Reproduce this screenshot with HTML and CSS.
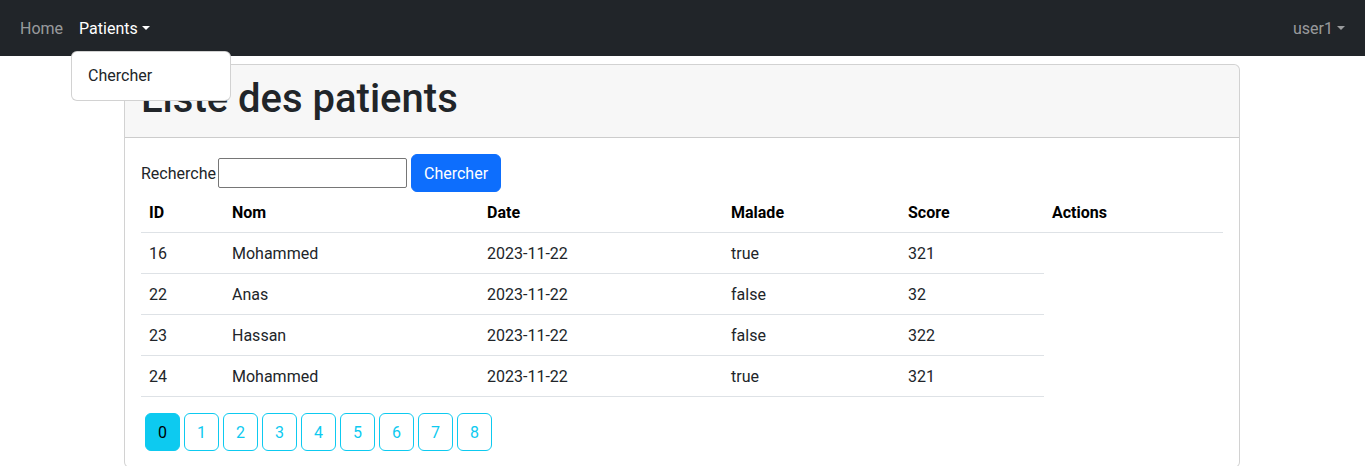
FILE: index.html
```html
<!DOCTYPE html>
<html lang="fr">
<head>
<meta charset="utf-8">
<title>Liste des patients</title>
<link rel="stylesheet" href="styles.css">
</head>
<body>
<nav class="navbar">
  <div class="nav-inner">
    <ul class="nav-list">
      <li class="nav-item"><a class="nav-link" href="#">Home</a></li>
      <li class="nav-item dropdown">
        <a class="nav-link active" href="#">Patients<span class="caret"></span></a>
        <ul class="dropdown-menu">
          <li><a class="dropdown-item" href="#">Chercher</a></li>
        </ul>
      </li>
    </ul>
    <ul class="nav-list">
      <li class="nav-item"><a class="nav-link" href="#">user1<span class="caret"></span></a></li>
    </ul>
  </div>
</nav>
<div class="container">
  <div class="card">
    <div class="card-header"><h1>Liste des patients</h1></div>
    <div class="card-body">
      <form class="search">
        <label>Recherche</label>
        <input type="text" class="search-input">
        <button type="button" class="btn btn-primary">Chercher</button>
      </form>
      <table class="table">
        <colgroup>
          <col class="c-id"><col class="c-nom"><col class="c-date"><col class="c-malade"><col class="c-score"><col class="c-actions">
        </colgroup>
        <thead>
          <tr><th>ID</th><th>Nom</th><th>Date</th><th>Malade</th><th>Score</th><th>Actions</th></tr>
        </thead>
        <tbody>
          <tr><td>16</td><td>Mohammed</td><td>2023-11-22</td><td>true</td><td>321</td></tr>
          <tr><td>22</td><td>Anas</td><td>2023-11-22</td><td>false</td><td>32</td></tr>
          <tr><td>23</td><td>Hassan</td><td>2023-11-22</td><td>false</td><td>322</td></tr>
          <tr><td>24</td><td>Mohammed</td><td>2023-11-22</td><td>true</td><td>321</td></tr>
        </tbody>
      </table>
      <div class="pages">
        <a class="page page-active" href="#">0</a>
        <a class="page" href="#">1</a>
        <a class="page" href="#">2</a>
        <a class="page" href="#">3</a>
        <a class="page" href="#">4</a>
        <a class="page" href="#">5</a>
        <a class="page" href="#">6</a>
        <a class="page" href="#">7</a>
        <a class="page" href="#">8</a>
      </div>
    </div>
  </div>
</div>
</body>
</html>
```
FILE: styles.css
```css
* { box-sizing: border-box; }
body {
  margin: 0;
  font-family: Roboto, "Noto Sans", sans-serif;
  font-size: 16px;
  line-height: 1.5;
  color: #212529;
  background: #fff;
}
a { text-decoration: none; }
ul { list-style: none; margin: 0; padding: 0; }

.navbar {
  background: #212529;
  padding: 8px 0;
  height: 56px;
}
.nav-inner {
  display: flex;
  justify-content: space-between;
  padding: 0 12px;
}
.nav-list { display: flex; }
.nav-item { position: relative; }
.nav-link {
  display: block;
  padding: 9px 8px 7px;
  color: rgba(255,255,255,.55);
}
.nav-link.active { color: #fff; }
.caret {
  display: inline-block;
  margin-left: 0.255em;
  vertical-align: 0.255em;
  border-top: 0.3em solid;
  border-right: 0.3em solid transparent;
  border-left: 0.3em solid transparent;
  border-bottom: 0;
}
.dropdown-menu {
  position: absolute;
  top: 100%;
  left: 0;
  margin-top: 3px;
  min-width: 160px;
  padding: 8px 0;
  background: #fff;
  border: 1px solid rgba(0,0,0,.175);
  border-radius: 6px;
  z-index: 10;
}
.dropdown-item {
  display: block;
  padding: 4px 16px;
  color: #212529;
  white-space: nowrap;
}

.container {
  width: 1140px;
  margin: 0 0 0 112px;
  padding: 0 12px;
}
.card {
  margin-top: 8px;
  border: 1px solid rgba(0,0,0,.175);
  border-radius: 6px;
  background: #fff;
}
.card-header {
  padding: 8px 16px;
  background: rgba(0,0,0,.03);
  border-bottom: 1px solid rgba(0,0,0,.175);
  border-radius: 5px 5px 0 0;
}
.card-header h1 {
  margin: 0 0 6px;
  padding-top: 2px;
  font-size: 40px;
  font-weight: 500;
  line-height: 1.2;
}
.card-body { padding: 16px; }

.search {
  display: flex;
  align-items: center;
  height: 38px;
}
.search label { margin-right: 2px; padding-top: 1px; }
.search-input {
  width: 189px;
  height: 30px;
  border: 1px solid #767676;
  border-radius: 2px;
  font: inherit;
  margin-right: 4px;
  padding: 1px 2px;
}
.btn {
  display: inline-block;
  padding: 7px 12px 5px;
  font: inherit;
  line-height: 1.5;
  border: 1px solid transparent;
  border-radius: 6px;
  cursor: pointer;
}
.btn-primary { background: #0d6efd; border-color: #0d6efd; color: #fff; }

.table {
  width: 100%;
  border-collapse: collapse;
  margin-bottom: 16px;
  color: #212529;
}
.table th, .table td {
  padding: 9px 8px 7px;
  text-align: left;
  border-bottom: 1px solid #dee2e6;
  vertical-align: top;
}
.table th { font-weight: 700; color: #000; }
.c-id { width: 83px; }
.c-nom { width: 255px; }
.c-date { width: 244px; }
.c-malade { width: 177px; }
.c-score { width: 144px; }
.c-actions { width: 179px; }

.pages { display: flex; gap: 4px; padding-left: 4px; }
.page {
  display: inline-block;
  min-width: 35px;
  height: 38px;
  padding: 7px 12px 5px;
  text-align: center;
  color: #0dcaf0;
  border: 1px solid #0dcaf0;
  border-radius: 6px;
}
.page-active { background: #0dcaf0; color: #000; }
```
